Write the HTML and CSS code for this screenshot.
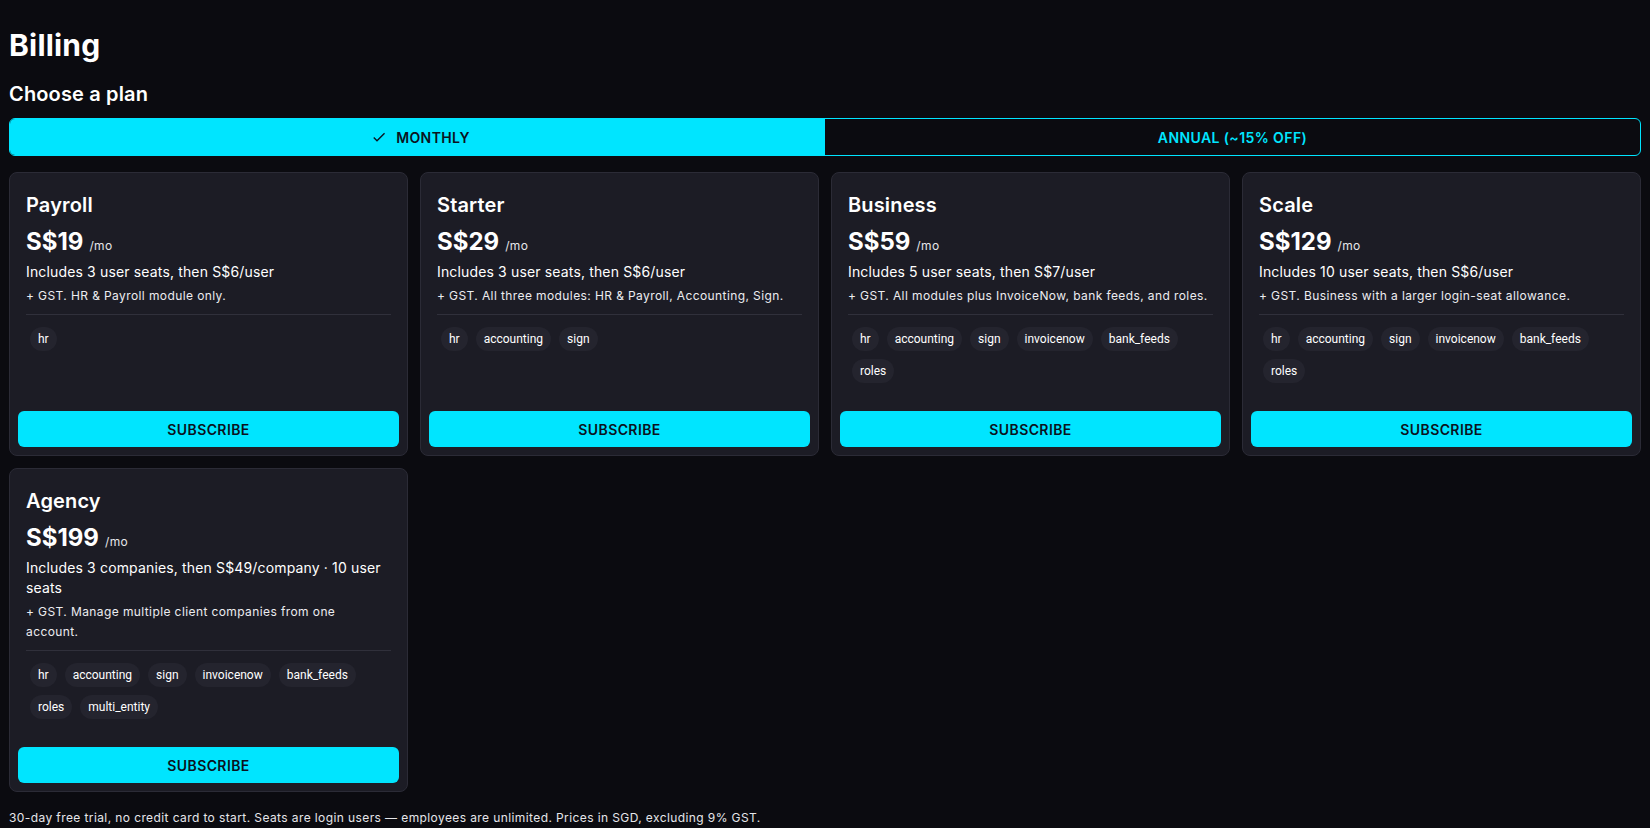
FILE: index.html
```html
<!DOCTYPE html>
<html lang="en">
<head>
    <meta charset="UTF-8">
    <meta name="viewport" content="width=device-width, initial-scale=1.0">
    <title>Billing</title>
    <link rel="stylesheet" href="styles.css">
</head>
<body>
    <div class="page">
        <h1>Billing</h1>
        <h2>Choose a plan</h2>

        <!-- Toggle bulanan / tahunan -->
        <div class="toggle">
            <button class="toggle-btn active">
                <svg class="check" viewBox="0 0 24 24"><path d="M9 16.17 4.83 12l-1.42 1.41L9 19 21 7l-1.41-1.41z"/></svg>
                Monthly
            </button>
            <button class="toggle-btn">Annual (~15% off)</button>
        </div>

        <!-- Daftar paket -->
        <div class="plans">
            <div class="card">
                <div class="card-content">
                    <div class="plan-name">Payroll</div>
                    <div class="price">S$19<span class="per">/mo</span></div>
                    <div class="seats">Includes 3 user seats, then S$6/user</div>
                    <div class="note">+ GST. HR &amp; Payroll module only.</div>
                    <hr class="divider">
                    <div class="chips">
                        <span class="chip">hr</span>
                    </div>
                </div>
                <div class="card-actions">
                    <button class="btn-subscribe">Subscribe</button>
                </div>
            </div>

            <div class="card">
                <div class="card-content">
                    <div class="plan-name">Starter</div>
                    <div class="price">S$29<span class="per">/mo</span></div>
                    <div class="seats">Includes 3 user seats, then S$6/user</div>
                    <div class="note">+ GST. All three modules: HR &amp; Payroll, Accounting, Sign.</div>
                    <hr class="divider">
                    <div class="chips">
                        <span class="chip">hr</span>
                        <span class="chip">accounting</span>
                        <span class="chip">sign</span>
                    </div>
                </div>
                <div class="card-actions">
                    <button class="btn-subscribe">Subscribe</button>
                </div>
            </div>

            <div class="card">
                <div class="card-content">
                    <div class="plan-name">Business</div>
                    <div class="price">S$59<span class="per">/mo</span></div>
                    <div class="seats">Includes 5 user seats, then S$7/user</div>
                    <div class="note">+ GST. All modules plus InvoiceNow, bank feeds, and roles.</div>
                    <hr class="divider">
                    <div class="chips">
                        <span class="chip">hr</span>
                        <span class="chip">accounting</span>
                        <span class="chip">sign</span>
                        <span class="chip">invoicenow</span>
                        <span class="chip">bank_feeds</span>
                        <span class="chip">roles</span>
                    </div>
                </div>
                <div class="card-actions">
                    <button class="btn-subscribe">Subscribe</button>
                </div>
            </div>

            <div class="card">
                <div class="card-content">
                    <div class="plan-name">Scale</div>
                    <div class="price">S$129<span class="per">/mo</span></div>
                    <div class="seats">Includes 10 user seats, then S$6/user</div>
                    <div class="note">+ GST. Business with a larger login-seat allowance.</div>
                    <hr class="divider">
                    <div class="chips">
                        <span class="chip">hr</span>
                        <span class="chip">accounting</span>
                        <span class="chip">sign</span>
                        <span class="chip">invoicenow</span>
                        <span class="chip">bank_feeds</span>
                        <span class="chip">roles</span>
                    </div>
                </div>
                <div class="card-actions">
                    <button class="btn-subscribe">Subscribe</button>
                </div>
            </div>

            <div class="card">
                <div class="card-content">
                    <div class="plan-name">Agency</div>
                    <div class="price">S$199<span class="per">/mo</span></div>
                    <div class="seats">Includes 3 companies, then S$49/company · 10 user seats</div>
                    <div class="note">+ GST. Manage multiple client companies from one account.</div>
                    <hr class="divider">
                    <div class="chips">
                        <span class="chip">hr</span>
                        <span class="chip">accounting</span>
                        <span class="chip">sign</span>
                        <span class="chip">invoicenow</span>
                        <span class="chip">bank_feeds</span>
                        <span class="chip">roles</span>
                        <span class="chip">multi_entity</span>
                    </div>
                </div>
                <div class="card-actions">
                    <button class="btn-subscribe">Subscribe</button>
                </div>
            </div>
        </div>

        <p class="footnote">30-day free trial, no credit card to start. Seats are login users — employees are unlimited. Prices in SGD, excluding 9% GST.</p>
    </div>
</body>
</html>
```

FILE: styles.css
```css
/* Gaya umum halaman */
html, body {
    margin: 0;
    background-color: #0b0b10;
}

body {
    font-family: Inter, "Noto Sans", sans-serif;
    color: #fff;
    overflow: hidden;
}

.page {
    padding: 27px 9px 0;
}

h1 {
    font-size: 30px;
    line-height: 36px;
    font-weight: 700;
    letter-spacing: 0.2px;
    margin: 0;
}

h2 {
    font-size: 20px;
    line-height: 32px;
    font-weight: 600;
    letter-spacing: 0.15px;
    margin: 15px 0 0;
}

/* Toggle monthly / annual */
.toggle {
    display: flex;
    margin-top: 8px;
    border: 1px solid #00e5ff;
    border-radius: 6px;
    overflow: hidden;
}

.toggle-btn {
    flex: 1;
    height: 36px;
    display: flex;
    align-items: center;
    justify-content: center;
    gap: 9px;
    border: none;
    background: transparent;
    color: #00e5ff;
    font-family: Inter, sans-serif;
    font-size: 14px;
    font-weight: 600;
    letter-spacing: 0.4px;
    text-transform: uppercase;
    cursor: pointer;
}

.toggle-btn.active {
    background-color: #00e5ff;
    color: #0b1220;
}

.check {
    width: 16px;
    height: 16px;
    margin-left: 6px;
    fill: #0b1220;
}

/* Grid kartu paket */
.plans {
    display: grid;
    grid-template-columns: repeat(4, 1fr);
    gap: 12px;
    margin-top: 16px;
}

.card {
    display: flex;
    flex-direction: column;
    background-color: #1c1c25;
    border: 1px solid #2b2b36;
    border-radius: 8px;
}

.card-content {
    flex: 1;
    padding: 16px;
}

.plan-name {
    font-size: 20px;
    line-height: 32px;
    font-weight: 600;
    letter-spacing: 0.15px;
}

.price {
    font-size: 24px;
    line-height: 40px;
    font-weight: 700;
    margin-top: 1px;
}

.per {
    font-size: 12px;
    line-height: 1;
    font-weight: 400;
    letter-spacing: 0.4px;
    color: #e6e6ea;
    margin-left: 6px;
}

.seats {
    font-size: 14px;
    line-height: 20px;
    letter-spacing: 0.15px;
}

.note {
    font-size: 12px;
    line-height: 20px;
    letter-spacing: 0.4px;
    margin-top: 4px;
    color: #ececf0;
}

.divider {
    border: none;
    border-top: 1px solid #30303b;
    margin: 8px 0 8px;
}

/* Chip modul */
.chips {
    display: flex;
    flex-wrap: wrap;
}

.chip {
    margin: 4px;
    height: 24px;
    line-height: 24px;
    padding: 0 8px;
    border-radius: 12px;
    background-color: #24242e;
    font-family: Roboto, Arial, sans-serif;
    font-size: 12px;
}

.card-actions {
    padding: 8px;
}

.btn-subscribe {
    width: 100%;
    height: 36px;
    border: none;
    border-radius: 6px;
    background-color: #00e5ff;
    color: #0b1220;
    font-family: Inter, sans-serif;
    font-size: 14px;
    font-weight: 600;
    letter-spacing: 0.4px;
    text-transform: uppercase;
    cursor: pointer;
}

.footnote {
    font-size: 12px;
    line-height: 20px;
    letter-spacing: 0.4px;
    margin: 16px 0 0;
    color: #e6e6ea;
}
```
